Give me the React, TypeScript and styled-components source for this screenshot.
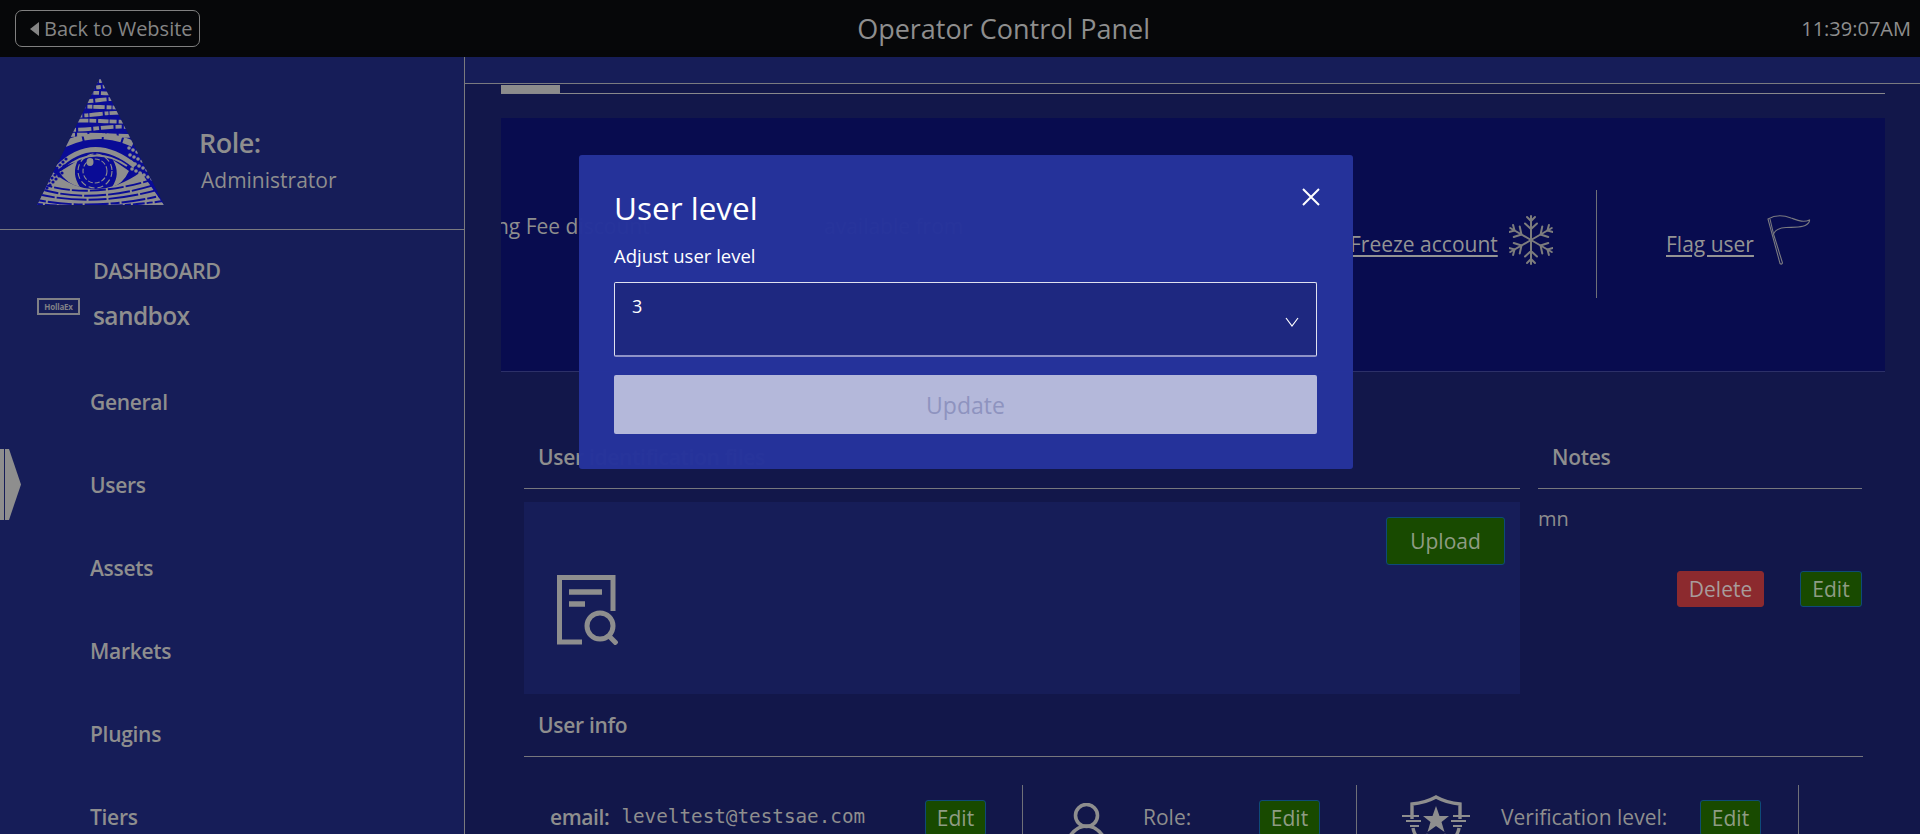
import React from 'react';
import styled, { createGlobalStyle } from 'styled-components';

const Global = createGlobalStyle`
  html, body { margin: 0; padding: 0; height: 100%; background: #12174a; overflow: hidden; }
  * { box-sizing: border-box; }
  #root { height: 834px; }
`;

const GRAY = '#8e8e8e';
const EYE_BLUE = '#0a0c96';

const Page = styled.div`
  position: relative;
  width: 1920px;
  height: 834px;
  overflow: hidden;
  font-family: "Open Sans", "Noto Sans", sans-serif;
  color: ${GRAY};
  display: flex;
  flex-direction: column;
`;

const TopBar = styled.header`
  height: 57px;
  flex: none;
  background: #060709;
  display: flex;
  align-items: center;
  justify-content: space-between;
  padding: 0 9px 0 15px;
`;

const BackButton = styled.a`
  width: 185px;
  height: 37px;
  border: 1px solid #808080;
  border-radius: 7px;
  display: flex;
  align-items: center;
  gap: 5px;
  padding-left: 14px;
  font-size: 20px;
  color: #858585;
`;

const Title = styled.div`
  font-size: 27px;
  margin-left: 6px;
  color: ${GRAY};
`;

const Clock = styled.div`
  font-size: 20px;
  color: ${GRAY};
`;

const Body = styled.div`
  flex: 1;
  display: flex;
  min-height: 0;
`;

const Sidebar = styled.aside`
  width: 465px;
  flex: none;
  background: #161d58;
  border-right: 1px solid #7a7a7e;
`;

const RoleHeader = styled.div`
  height: 173px;
  border-bottom: 1px solid #7a7a80;
  display: flex;
  padding: 21px 0 0 37px;
  gap: 35px;
`;

const RoleText = styled.div`
  padding-top: 46px;
`;

const RoleLabel = styled.div`
  font-size: 27px;
  font-weight: 600;
  line-height: 38px;
  letter-spacing: -0.5px;
`;

const RoleValue = styled.div`
  font-size: 21px;
  line-height: 32px;
  margin: 2px 0 0 2px;
`;

const Exchange = styled.div`
  height: 131px;
  display: flex;
  padding: 26px 0 0 37px;
  gap: 13px;
`;

const ExchangeLogo = styled.div`
  width: 43px;
  height: 17px;
  margin-top: 42px;
  border: 2px solid #808086;
  color: #808086;
  font-size: 8px;
  font-weight: 700;
  line-height: 13px;
  text-align: center;
  letter-spacing: -0.2px;
`;

const ExchangeLabels = styled.div`
  display: flex;
  flex-direction: column;
`;

const DashLabel = styled.div`
  font-size: 21.5px;
  font-weight: 600;
  line-height: 30px;
  letter-spacing: -0.6px;
`;

const SandboxLabel = styled.div`
  font-size: 24.5px;
  font-weight: 600;
  line-height: 34px;
  margin-top: 13px;
  letter-spacing: -0.6px;
`;

const NavItem = styled.div`
  position: relative;
  height: 82.9px;
  padding-left: 90px;
  display: flex;
  align-items: center;
  font-size: 21px;
  font-weight: 600;
  letter-spacing: -0.3px;
`;

const ActiveArrow = styled.span`
  position: absolute;
  left: 0;
  top: 5px;
  width: 21px;
  height: 71px;
  background: linear-gradient(90deg, #8e8e8e 0 4px, #161d58 4px 5px, #8e8e8e 5px);
  clip-path: polygon(0 0, 9px 0, 100% 50%, 9px 100%, 0 100%);
`;

const Main = styled.main`
  flex: 1;
  min-width: 0;
  background: #12174a;
`;

const TopStrip = styled.div`
  height: 27px;
  background: #161d58;
  border-bottom: 1px solid #7a7a80;
`;

const Content = styled.div`
  padding: 0 35px 0 36px;
`;

const TabRow = styled.div`
  height: 10px;
  border-bottom: 1.5px solid #88888c;
  padding-top: 1px;
`;

const TabMark = styled.div`
  width: 59px;
  height: 8px;
  background: #8c8c8c;
`;

const ActionPanel = styled.section`
  margin-top: 24px;
  height: 254px;
  background: #080c4f;
  border-bottom: 1px solid #2c3068;
  display: flex;
  align-items: center;
  overflow: hidden;
  font-size: 21px;
`;

const FeeColumn = styled.div`
  flex: 1;
  min-width: 0;
  overflow: hidden;
  white-space: nowrap;
  display: flex;
  margin-bottom: 38px;
  font-size: 21px;
  line-height: 32px;
`;

const FeeText = styled.div`
  margin-left: -55px;
  width: 378px;
  flex: none;
`;

const ActionCell = styled.div`
  display: flex;
  align-items: center;
  height: 108px;
  margin-bottom: 2px;
  & > svg { margin-bottom: 7px; }
`;

const FreezeCell = styled(ActionCell)`
  gap: 11px;
  width: 246px;
  flex: none;
`;

const FlagCell = styled(ActionCell)`
  width: 289px;
  flex: none;
  border-left: 1px solid #6f7078;
  padding-left: 69px;
  gap: 13px;
`;

const ActionLink = styled.a`
  text-decoration: underline;
  text-underline-offset: 3px;
  color: #949494;
`;

const TwoCols = styled.div`
  display: grid;
  grid-template-columns: 996px 324px;
  gap: 18px;
  padding: 0 22px 0 23px;
`;

const ColHead = styled.div`
  height: 117px;
  border-bottom: 1px solid #77777d;
  display: flex;
  align-items: flex-end;
  padding: 0 0 17px 14px;
  font-size: 21px;
  font-weight: 600;
  letter-spacing: -0.3px;
  white-space: nowrap;
`;

const DocBox = styled.div`
  height: 192px;
  margin-top: 13px;
  background: #161d58;
  padding: 15px 15px 0 33px;
  display: flex;
  justify-content: space-between;
  align-items: flex-start;
`;

const DocIcon = styled.div`
  margin-top: 58px;
`;

const Button = styled.button<{ $w: number; $h?: number; $danger?: boolean }>`
  width: ${p => p.$w}px;
  height: ${p => p.$h ?? 36}px;
  flex: none;
  padding: 0;
  font-family: inherit;
  font-size: 21px;
  line-height: 1;
  border-radius: 3px;
  background: ${p => (p.$danger ? '#8c2a2e' : '#184a00')};
  border: 1px solid ${p => (p.$danger ? '#8c2a2e' : '#0e4a78')};
  color: ${p => (p.$danger ? '#a89c9c' : '#8f9c84')};
`;

const NoteText = styled.div`
  font-size: 20px;
  line-height: 26px;
  margin-top: 17px;
`;

const NoteActions = styled.div`
  display: flex;
  justify-content: flex-end;
  gap: 36px;
  margin-top: 39px;
`;

const InfoHead = styled.div`
  margin: 0 22px 0 23px;
  height: 63px;
  border-bottom: 1px solid #77777d;
  display: flex;
  align-items: flex-end;
  padding: 0 0 17px 14px;
  font-size: 21px;
  font-weight: 600;
  letter-spacing: -0.3px;
`;

const InfoRow = styled.div`
  margin: 28px 22px 0 23px;
  display: grid;
  grid-template-columns: 499px 334px 442px 1fr;
  height: 120px;
`;

const InfoCell = styled.div<{ $pl: number; $pr?: number }>`
  border-right: 1px solid #6f7078;
  display: flex;
  align-items: flex-start;
  padding: 15px ${p => p.$pr ?? 0}px 0 ${p => p.$pl}px;
  &:last-child { border-right: none; }
`;

const InfoLabel = styled.span<{ $w: number; $pl: number }>`
  font-size: 21px;
  line-height: 34px;
  width: ${p => p.$w}px;
  padding-left: ${p => p.$pl}px;
  white-space: nowrap;
  flex: none;
`;

const EmailKey = styled.span`
  font-size: 21px;
  font-weight: 600;
  line-height: 34px;
  letter-spacing: -0.4px;
`;

const EmailValue = styled.span`
  font-family: "DejaVu Sans Mono", monospace;
  font-size: 19.3px;
  line-height: 34px;
  margin-left: 12px;
  flex: 1;
`;

const InfoIcon = styled.div<{ $w: number; $mt: number }>`
  width: ${p => p.$w}px;
  flex: none;
  margin-top: ${p => p.$mt}px;
`;

const Modal = styled.div`
  position: absolute;
  left: 579px;
  top: 155px;
  width: 774px;
  height: 314px;
  background: rgba(38, 51, 155, 0.985);
  border-radius: 3px;
  padding: 33px 36px 0 35px;
  color: #fff;
`;

const ModalTitle = styled.div`
  font-size: 31.5px;
  line-height: 40px;
`;

const ModalLabel = styled.div`
  font-size: 18.5px;
  line-height: 24px;
  margin-top: 16px;
`;

const SelectBox = styled.div`
  height: 75px;
  margin-top: 14px;
  background: #1e2880;
  border: 1px solid #e0e1ef;
  border-bottom: 2px solid #8f93c8;
  border-radius: 2px;
  display: flex;
  justify-content: space-between;
  align-items: center;
  padding: 0 17px;
  font-size: 18px;
  & > svg { margin-top: 5px; }
`;

const SelectValue = styled.span`
  align-self: flex-start;
  line-height: 24px;
  padding-top: 11px;
`;

const SubmitButton = styled.button`
  width: 100%;
  height: 59px;
  margin-top: 18px;
  padding: 0;
  background: #b4b8da;
  border: none;
  border-radius: 2px;
  font-family: inherit;
  font-size: 23px;
  color: #8e93bf;
`;

const CloseIcon = styled.svg`
  position: absolute;
  right: 32px;
  top: 32px;
`;

const Pyramid = () => {
  const rows = [
    [3, '3 1'], [9, '5 2'], [15, '9 1 6 2'], [22, '12 2 8 2'], [29, '5 1 12 2'],
    [36, '14 2 4 1'], [43, '7 2 11 1'], [50, '6 2 13 2'], [57, '10 2 16 2'],
  ] as const;
  const lower = [
    ['M0 104 Q50 124 127 98', '16 2'],
    ['M0 110 Q55 128 127 104', '22 2'],
    ['M0 116 Q60 130 127 110', '18 2 30 2'],
    ['M0 122 Q60 133 127 117', '9 2 24 2'],
    ['M0 126 Q60 132 127 123', '6 2 12 2'],
  ] as const;
  return (
    <svg width="127" height="127" viewBox="0 0 127 127" style={{ flex: 'none' }}>
      <defs>
        <clipPath id="tri"><path d="M63 0 L127 127 L0 127 Z" /></clipPath>
      </defs>
      <g clipPath="url(#tri)">
        <rect width="127" height="127" fill={EYE_BLUE} />
        {rows.map(([y, d], i) => (
          <path
            key={y}
            d={`M${10} ${y + 1} Q40 ${y + (i % 2 ? 3 : -1)} 63 ${y} T116 ${y + 1}`}
            stroke={GRAY}
            strokeWidth="3.8"
            strokeDasharray={d}
            fill="none"
          />
        ))}
        <path d="M28 66 Q62 50 96 66" stroke={GRAY} strokeWidth="6" strokeDasharray="18 2" fill="none" />
        <path d="M20 90 Q56 54 98 88" stroke={GRAY} strokeWidth="5" fill="none" />
        <path d="M28 90 Q58 66 90 88" stroke={GRAY} strokeWidth="2" fill="none" />
        <path d="M0 127 L16 94 Q56 128 104 94 L127 127 Z" fill={GRAY} />
        <path d="M18 93 Q58 70 95 94 Q60 118 18 93 Z" fill={EYE_BLUE} />
        <path d="M22 94 Q34 87 41 82 Q34 96 43 109 Q30 106 22 94 Z" fill={GRAY} />
        <path d="M92 93 Q82 86 76 82 Q84 96 75 109 Q86 106 92 93 Z" fill={GRAY} />
        <circle cx="58" cy="93" r="12" fill="none" stroke={GRAY} strokeWidth="1.1" strokeDasharray="5 2" />
        <circle cx="58" cy="93" r="17" fill="none" stroke={GRAY} strokeWidth="1.1" strokeDasharray="6 3" />
        <ellipse cx="53" cy="84" rx="3.5" ry="4" fill={GRAY} />
        {lower.map(([d, dash]) => (
          <path key={d} d={d} stroke={EYE_BLUE} strokeWidth="1.9" strokeDasharray={dash} fill="none" />
        ))}
        {[0, 1, 2, 3, 4, 5].map(i => (
          <g key={i}>
            {[0, 1, 2, 3].map(j => (
              <circle key={j} cx={92 + i * 4 + j} cy={70 + j * 7 + i * 2} r="1.8" fill={GRAY} />
            ))}
            {[0, 1, 2].map(j => (
              <circle key={j} cx={14 + i * 3 - j * 2} cy={96 - i * 3 + j * 7} r="1.6" fill={EYE_BLUE} />
            ))}
          </g>
        ))}
      </g>
    </svg>
  );
};

const Snowflake = () => (
  <svg width="44" height="50" viewBox="0 0 44 50" fill="none" stroke="#7d7d7d" strokeWidth="2" strokeLinecap="round" style={{ flex: 'none' }}>
    {[0, 60, 120, 180, 240, 300].map(a => (
      <g key={a} transform={`rotate(${a} 22 25)`}>
        <path d="M22 25 V1" />
        <path d="M22 6 L18 2 M22 6 L26 2" />
        <path d="M22 14 L16 8.5 M22 14 L28 8.5" />
      </g>
    ))}
  </svg>
);

const FlagIcon = () => (
  <svg width="44" height="50" viewBox="0 0 44 50" fill="none" stroke="#7a7a80" strokeWidth="1.1" style={{ flex: 'none' }}>
    <path d="M1 4 L13 48.5 Q14.5 50 15.5 48 L6.5 19 Q9 13 19 12.5 C30 12 40 13 42.5 6 L42.5 5 C36 8 30 5 24 3 C16 0 8 0 1 4 Z" />
    <path d="M3 4 L6.5 19" />
  </svg>
);

const DocSearch = () => (
  <svg width="61" height="70" viewBox="0 0 61 70" fill="none" stroke={GRAY} style={{ display: 'block' }}>
    <path d="M25 67 H2.5 V2.5 H56 V36" strokeWidth="5" />
    <path d="M12 17 H45" strokeWidth="5.5" />
    <path d="M12 29 H28" strokeWidth="5.5" />
    <circle cx="43" cy="51" r="13" strokeWidth="5" />
    <path d="M52 61 L60 69" strokeWidth="5" />
  </svg>
);

const UserIcon = () => (
  <svg width="35" height="34" viewBox="0 0 35 34" fill="none" stroke={GRAY} strokeWidth="3.6" style={{ display: 'block' }}>
    <path d="M1 33 Q8 23 17.5 23 Q27 23 34 33" />
    <circle cx="17.5" cy="12.5" r="11" />
  </svg>
);

const ShieldIcon = () => (
  <svg width="70" height="60" viewBox="0 0 70 60" fill="none" stroke={GRAY} style={{ display: 'block' }}>
    <path d="M11 24 V9 Q24 8 35 2 Q46 8 59 9 V24" strokeWidth="3.4" />
    <path d="M1 21 H18 M5 26 H20 M9 31 H18 M69 21 H52 M65 26 H50 M61 31 H52" strokeWidth="2.2" />
    <path d="M35 11 L38.5 21 H48 L40.5 27 L43.5 37 L35 31 L26.5 37 L29.5 27 L22 21 H31.5 Z" fill={GRAY} stroke="none" />
    <path d="M12 33 Q14 46 35 58 Q56 46 58 33" strokeWidth="3.4" />
    <path d="M26 38 l2 5 h5 l-4 3 l1.5 5 l-4.5 -3 l-4.5 3 l1.5 -5 l-4 -3 h5 Z" fill={GRAY} stroke="none" />
    <path d="M44 38 l2 5 h5 l-4 3 l1.5 5 l-4.5 -3 l-4.5 3 l1.5 -5 l-4 -3 h5 Z" fill={GRAY} stroke="none" />
  </svg>
);

const NAV = ['General', 'Users', 'Assets', 'Markets', 'Plugins', 'Tiers'];

export default function App() {
  return (
    <Page>
      <Global />
      <TopBar>
        <BackButton>
          <svg width="9" height="14" viewBox="0 0 9 14"><path d="M9 0 V14 L0 7 Z" fill="#858585" /></svg>
          Back to Website
        </BackButton>
        <Title>Operator Control Panel</Title>
        <Clock>11:39:07AM</Clock>
      </TopBar>
      <Body>
        <Sidebar>
          <RoleHeader>
            <Pyramid />
            <RoleText>
              <RoleLabel>Role:</RoleLabel>
              <RoleValue>Administrator</RoleValue>
            </RoleText>
          </RoleHeader>
          <Exchange>
            <ExchangeLogo>HollaEx</ExchangeLogo>
            <ExchangeLabels>
              <DashLabel>DASHBOARD</DashLabel>
              <SandboxLabel>sandbox</SandboxLabel>
            </ExchangeLabels>
          </Exchange>
          {NAV.map(n => (
            <NavItem key={n}>
              {n === 'Users' && <ActiveArrow />}
              {n}
            </NavItem>
          ))}
        </Sidebar>
        <Main>
          <TopStrip />
          <Content>
            <TabRow><TabMark /></TabRow>
            <ActionPanel>
              <FeeColumn>
                <FeeText>Trading Fee discount</FeeText>
                <div>available from</div>
              </FeeColumn>
              <FreezeCell>
                <ActionLink>Freeze account</ActionLink>
                <Snowflake />
              </FreezeCell>
              <FlagCell>
                <ActionLink>Flag user</ActionLink>
                <FlagIcon />
              </FlagCell>
            </ActionPanel>
            <TwoCols>
              <div>
                <ColHead>User identification files</ColHead>
                <DocBox>
                  <DocIcon><DocSearch /></DocIcon>
                  <Button $w={119} $h={48}>Upload</Button>
                </DocBox>
              </div>
              <div>
                <ColHead>Notes</ColHead>
                <NoteText>mn</NoteText>
                <NoteActions>
                  <Button $w={87} $danger>Delete</Button>
                  <Button $w={62}>Edit</Button>
                </NoteActions>
              </div>
            </TwoCols>
            <InfoHead>User info</InfoHead>
            <InfoRow>
              <InfoCell $pl={26} $pr={36}>
                <EmailKey>email:</EmailKey>
                <EmailValue>leveltest@testsae.com</EmailValue>
                <Button $w={61}>Edit</Button>
              </InfoCell>
              <InfoCell $pl={46}>
                <InfoIcon $w={35} $mt={3}><UserIcon /></InfoIcon>
                <InfoLabel $w={155} $pl={39}>Role:</InfoLabel>
                <Button $w={61}>Edit</Button>
              </InfoCell>
              <InfoCell $pl={44}>
                <InfoIcon $w={70} $mt={-5}><ShieldIcon /></InfoIcon>
                <InfoLabel $w={229} $pl={30}>Verification level:</InfoLabel>
                <Button $w={61}>Edit</Button>
              </InfoCell>
              <InfoCell $pl={0} />
            </InfoRow>
          </Content>
        </Main>
      </Body>
      <Modal>
        <CloseIcon width="20" height="20" viewBox="0 0 20 20" stroke="#fff" strokeWidth="2" fill="none">
          <path d="M2 2 L18 18 M18 2 L2 18" />
        </CloseIcon>
        <ModalTitle>User level</ModalTitle>
        <ModalLabel>Adjust user level</ModalLabel>
        <SelectBox>
          <SelectValue>3</SelectValue>
          <svg width="14" height="10" viewBox="0 0 14 10" fill="none" stroke="#fff" strokeWidth="1.2"><path d="M1 1 L7 9 L13 1" /></svg>
        </SelectBox>
        <SubmitButton>Update</SubmitButton>
      </Modal>
    </Page>
  );
}
